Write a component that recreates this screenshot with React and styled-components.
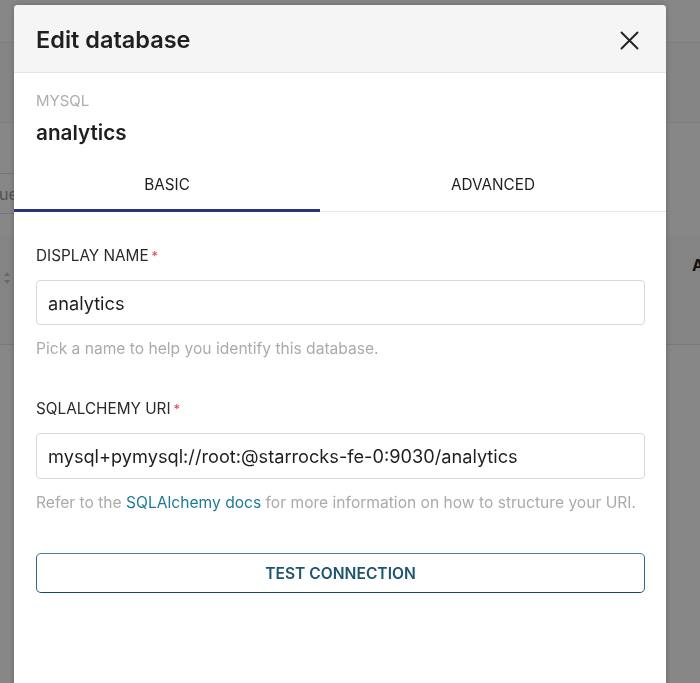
import React from "react";
import styled, { createGlobalStyle } from "styled-components";

const GlobalStyle = createGlobalStyle`
  html, body {
    margin: 0;
    padding: 0;
    height: 100%;
    overflow: hidden;
    font-family: Inter, "Noto Sans", "Liberation Sans", sans-serif;
    -webkit-font-smoothing: antialiased;
  }
  * {
    box-sizing: border-box;
  }
`;

// page that sits behind the modal
const Page = styled.div`
  width: 700px;
  height: 683px;
  background: #fff;
  display: flex;
  flex-direction: column;
`;

const PageBar = styled.div`
  height: ${(p) => p.h}px;
  background: ${(p) => p.bg || "#fff"};
  border-bottom: 1px solid #ededed;
`;

const SearchRow = styled.div`
  height: 114px;
  background: #fff;
  display: flex;
  align-items: flex-end;
  padding-bottom: 23px;
`;

const SearchInput = styled.div`
  width: 80px;
  height: 41px;
  margin-left: -50px;
  border: 1px solid #dcdcdc;
  border-radius: 4px;
  display: flex;
  align-items: center;
  padding-left: 48px;
  color: #999;
  font-size: 16px;
  overflow: hidden;
  white-space: nowrap;
`;

const TableHead = styled.div`
  height: 108px;
  background: #fafafa;
  border-bottom: 1px solid #e4e4e4;
  display: flex;
  align-items: center;
  justify-content: space-between;
  padding: 0 0 52px 0;
`;

const SortIcon = styled.svg`
  margin-left: 3px;
  margin-top: 26px;
`;

const HeadText = styled.div`
  font-weight: 700;
  font-size: 16px;
  color: #222;
  margin-right: -4px;
`;

const Overlay = styled.div`
  position: fixed;
  inset: 0;
  background: rgba(0, 0, 0, 0.47);
`;

const Modal = styled.div`
  position: absolute;
  left: 14px;
  top: 5px;
  width: 652px;
  height: 720px;
  background: #fff;
  border-radius: 4px 4px 0 0;
  box-shadow: 0 0 6px rgba(0, 0, 0, 0.25);
  overflow: hidden;
`;

const Header = styled.div`
  height: 68px;
  background: #f5f5f5;
  border-bottom: 1px solid #e6e6e6;
  display: flex;
  align-items: center;
  justify-content: space-between;
  padding: 0 27px 0 22px;
`;

const Title = styled.h2`
  margin: 0;
  margin-top: 2px;
  font-size: 23.5px;
  font-weight: 600;
  color: #1f1f1f;
`;

const Close = styled.button`
  border: 0;
  background: none;
  padding: 0;
  margin-top: 4px;
  width: 20px;
  height: 20px;
  display: flex;
  align-items: center;
  justify-content: center;
  cursor: pointer;
`;

const DbInfo = styled.div`
  padding: 18px 22px 0;
`;

const DbType = styled.div`
  font-size: 15px;
  line-height: 20px;
  color: #adadad;
`;

const DbName = styled.div`
  margin-top: 8px;
  font-size: 20.7px;
  line-height: 27px;
  font-weight: 600;
  color: #1f1f1f;
`;

const Tabs = styled.div`
  margin-top: 16px;
  display: flex;
  border-bottom: 1px solid #e8e8e8;
`;

const Tab = styled.div`
  flex: 0 0 ${(p) => p.w}px;
  text-align: center;
  font-size: 15.3px;
  line-height: 20px;
  color: #1f1f1f;
  padding: 13px 0 14px;
  border-bottom: 3px solid ${(p) => (p.active ? "#263676" : "transparent")};
  margin-bottom: -1px;
`;

const Form = styled.div`
  padding: 34px 21px 0 22px;
`;

const Field = styled.div`
  & + & {
    margin-top: 40px;
  }
`;

const Label = styled.label`
  display: block;
  font-size: 15.3px;
  line-height: 20px;
  color: #2a2a2a;
  margin-bottom: 14px;

  span {
    color: #e04355;
    margin-left: 3px;
    font-size: 13px;
    vertical-align: top;
  }
`;

const Input = styled.input`
  display: block;
  width: 100%;
  height: ${(p) => p.h || 45}px;
  border: 1px solid #d9d9d9;
  border-radius: 4px;
  padding: 0 11px;
  font-family: inherit;
  font-size: 18.2px;
  color: #1f1f1f;
  outline: none;
`;

const Help = styled.div`
  margin-top: 14px;
  font-size: 15.6px;
  line-height: 20px;
  color: #ababab;

  a {
    color: #1f7a97;
    text-decoration: none;
  }
`;

const TestButton = styled.button`
  display: block;
  width: 100%;
  height: 40px;
  margin-top: 40px;
  background: #fff;
  border: 1px solid #2c6a82;
  border-top-color: #4a8396;
  border-bottom-color: #174a63;
  border-radius: 5px;
  font-family: inherit;
  font-size: 15.6px;
  font-weight: 600;
  color: #1d5570;
  cursor: pointer;
`;

export default function App() {
  return (
    <>
      <GlobalStyle />
      <Page>
        <PageBar h={43} />
        <PageBar h={80} bg="#fcfcfc" />
        <SearchRow>
          <SearchInput>ue</SearchInput>
        </SearchRow>
        <TableHead>
          <SortIcon width="8" height="14" viewBox="0 0 8 14">
            <path d="M4 1 L7 5 L1 5 Z M4 13 L7 9 L1 9 Z" fill="#c4c4c4" />
          </SortIcon>
          <HeadText>A</HeadText>
        </TableHead>
      </Page>
      <Overlay>
        <Modal>
          <Header>
            <Title>Edit database</Title>
            <Close aria-label="Close">
              <svg width="19" height="19" viewBox="0 0 19 19">
                <path
                  d="M1.5 1.5 L17.5 17.5 M17.5 1.5 L1.5 17.5"
                  stroke="#222"
                  strokeWidth="1.9"
                  strokeLinecap="round"
                />
              </svg>
            </Close>
          </Header>
          <DbInfo>
            <DbType>MYSQL</DbType>
            <DbName>analytics</DbName>
          </DbInfo>
          <Tabs>
            <Tab active w={306}>
              BASIC
            </Tab>
            <Tab w={346}>ADVANCED</Tab>
          </Tabs>
          <Form>
            <Field>
              <Label>
                DISPLAY NAME<span>*</span>
              </Label>
              <Input defaultValue="analytics" h={45} />
              <Help>Pick a name to help you identify this database.</Help>
            </Field>
            <Field>
              <Label>
                SQLALCHEMY URI<span>*</span>
              </Label>
              <Input
                defaultValue="mysql+pymysql://root:@starrocks-fe-0:9030/analytics"
                h={46}
              />
              <Help>
                Refer to the <a href="#docs">SQLAlchemy docs</a> for more
                information on how to structure your URI.
              </Help>
            </Field>
            <TestButton>TEST CONNECTION</TestButton>
          </Form>
        </Modal>
      </Overlay>
    </>
  );
}
